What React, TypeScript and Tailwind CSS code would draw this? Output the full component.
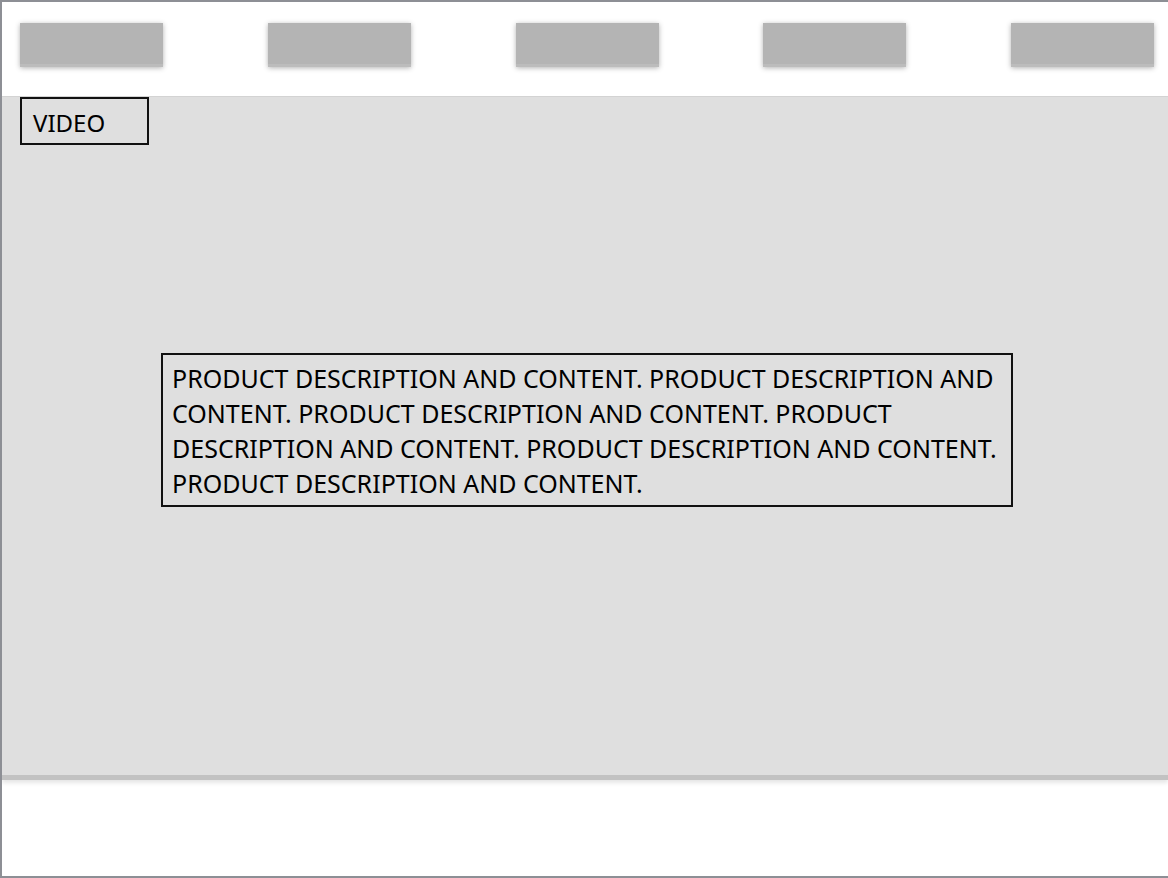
const NAV_ITEMS = [0, 1, 2, 3, 4];

const DESCRIPTION_LINES = [
  'PRODUCT DESCRIPTION AND CONTENT. PRODUCT DESCRIPTION AND',
  'CONTENT. PRODUCT DESCRIPTION AND CONTENT. PRODUCT',
  'DESCRIPTION AND CONTENT. PRODUCT DESCRIPTION AND CONTENT.',
  'PRODUCT DESCRIPTION AND CONTENT.',
];

export default function App() {
  return (
    <div
      className="flex h-[878px] w-[1168px] flex-col overflow-hidden border-t-2 border-b-2 border-l-2 border-[#8d8f95] bg-white text-black"
      style={{ fontFamily: '"Noto Sans", "Open Sans", sans-serif' }}
    >
      {/* top nav */}
      <header className="flex h-[95px] shrink-0 items-start justify-between border-b border-[#d4d4d4] pl-[18px] pr-[14px] pt-[21px]">
        {NAV_ITEMS.map(i => (
          <div
            key={i}
            className="h-[44px] w-[143px] border-b-[3px] border-[#bcbcbc] bg-[#b4b4b4] shadow-[0_1px_5px_rgba(0,0,0,0.3)]"
          />
        ))}
      </header>

      {/* video area */}
      <main className="relative flex h-[683px] shrink-0 flex-col bg-[#dfdfdf] shadow-[0_3px_4px_rgba(0,0,0,0.1)]">
        <div className="ml-[18px] flex h-[48px] w-[129px] items-center border-2 border-[#111] pl-[11px] pt-[4px] text-[24px] leading-none">
          VIDEO
        </div>

        <div className="ml-[159px] mt-[208px] w-[852px] border-2 border-[#111] pb-[4px] pl-[9px] pt-[6px] text-[25px] leading-[35px]">
          {DESCRIPTION_LINES.map((line, idx) => (
            <span key={idx} className="block whitespace-nowrap">
              {line}
            </span>
          ))}
        </div>

        <div className="absolute inset-x-0 bottom-0 h-[5px] bg-[#c2c2c2]" />
      </main>

      <footer className="flex-1 bg-white" />
    </div>
  );
}
